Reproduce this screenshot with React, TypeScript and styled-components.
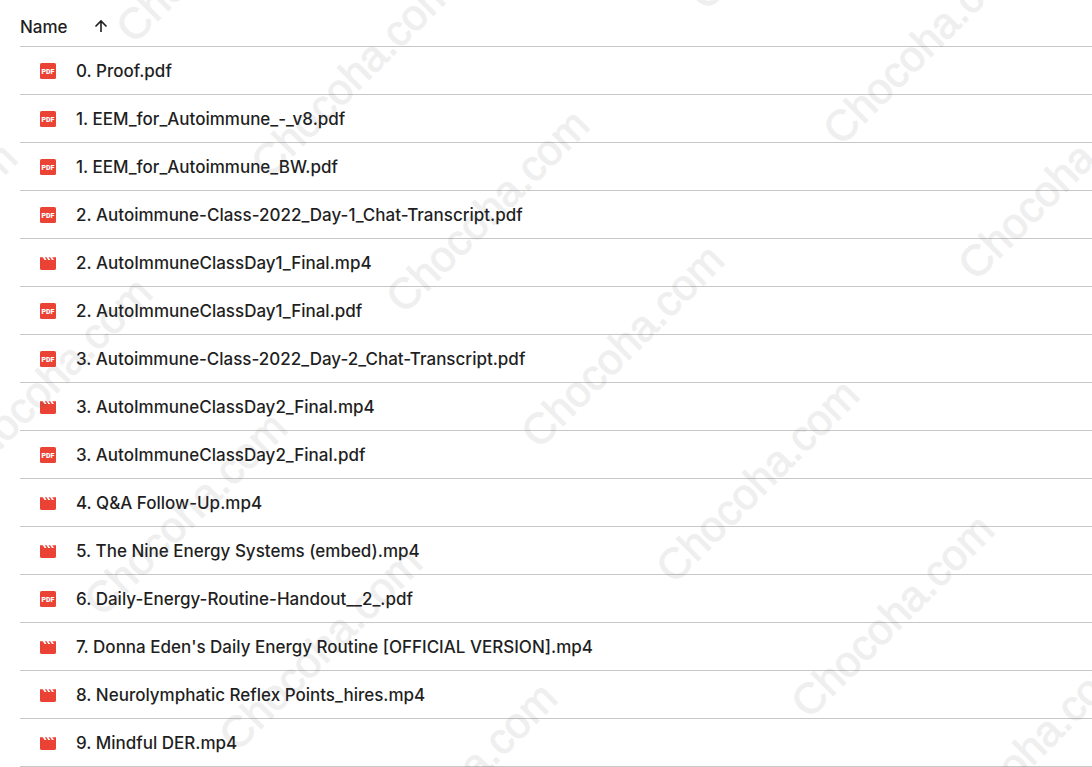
import React, { useState } from "react";
import styled, { createGlobalStyle } from "styled-components";

const GlobalStyle = createGlobalStyle`
  body {
    margin: 0;
    background: #fff;
    color: #1f1f1f;
    font-family: Inter, "Liberation Sans", sans-serif;
    font-size: 17px;
    font-weight: 500;
    line-height: 24px;
  }
`;

const Page = styled.main`
  position: relative;
  overflow: hidden;
  padding-left: 20px;
`;

const FileTable = styled.table`
  width: 100%;
  border-collapse: separate;
  border-spacing: 0;
`;

const HeaderCell = styled.th`
  height: 47px;
  padding: 8px 0 0;
  box-sizing: border-box;
  border-bottom: 1px solid #c7c7c7;
  text-align: left;
  font-weight: 500;
`;

const SortButton = styled.button`
  display: flex;
  align-items: center;
  gap: 24px;
  padding: 0;
  border: 0;
  background: none;
  color: inherit;
  font: inherit;
  cursor: pointer;
`;

const SortArrow = styled.svg<{ $descending: boolean }>`
  display: block;
  width: 18px;
  height: 18px;
  transform: ${(p) => (p.$descending ? "rotate(180deg)" : "none")};
`;

const FileCell = styled.td`
  height: 48px;
  padding: 0 20px;
  box-sizing: border-box;
  border-bottom: 1px solid #c7c7c7;
`;

const FileEntry = styled.div`
  display: flex;
  align-items: center;
  gap: 20px;
`;

const FileIcon = styled.svg`
  display: block;
  flex: none;
  width: 16px;
  height: 16px;
`;

const PdfLabel = styled.text`
  fill: #fff;
  font-family: Roboto, sans-serif;
  font-size: 7px;
  font-weight: 900;
`;

const WatermarkLayer = styled.svg`
  position: absolute;
  inset: 0;
  width: 100%;
  height: 100%;
  opacity: 0.09;
  pointer-events: none;
`;

const WatermarkText = styled.text`
  fill: #5a5a5a;
  stroke: #5a5a5a;
  stroke-width: 1px;
  font-family: "Liberation Sans", Arial, sans-serif;
  font-size: 43px;
  font-weight: 400;
`;

const files = [
  "0. Proof.pdf",
  "1. EEM_for_Autoimmune_-_v8.pdf",
  "1. EEM_for_Autoimmune_BW.pdf",
  "2. Autoimmune-Class-2022_Day-1_Chat-Transcript.pdf",
  "2. AutoImmuneClassDay1_Final.mp4",
  "2. AutoImmuneClassDay1_Final.pdf",
  "3. Autoimmune-Class-2022_Day-2_Chat-Transcript.pdf",
  "3. AutoImmuneClassDay2_Final.mp4",
  "3. AutoImmuneClassDay2_Final.pdf",
  "4. Q&A Follow-Up.mp4",
  "5. The Nine Energy Systems (embed).mp4",
  "6. Daily-Energy-Routine-Handout__2_.pdf",
  "7. Donna Eden's Daily Energy Routine [OFFICIAL VERSION].mp4",
  "8. Neurolymphatic Reflex Points_hires.mp4",
  "9. Mindful DER.mp4",
];

/* Baseline start of each diagonal mark, stepped 135px down and right. */
const marks = [
  { x: -168, y: 348, count: 5 },
  { x: 134, y: 45, count: 7 },
  { x: 706, y: 12, count: 3 },
].flatMap(({ x, y, count }) =>
  Array.from({ length: count }, (_, i) => ({ x: x + 135 * i, y: y + 135 * i })),
);

function PdfIcon() {
  return (
    <FileIcon viewBox="0 0 16 16" role="img" aria-label="PDF">
      <rect width="16" height="16" rx="1.5" fill="#ea4335" />
      <PdfLabel x="8" y="10.500" textAnchor="middle">
        PDF
      </PdfLabel>
    </FileIcon>
  );
}

function VideoIcon() {
  return (
    <FileIcon viewBox="0 0 16 16" role="img" aria-label="Video">
      <path
        fill="#ea4335"
        d="M0 2.200H2.800L4.600 5H6.600L4.800 2.200H6.500L8.300 5H10.300L8.500 2.200H10.200L12 5H14L12.200 2.200H16V13.600Q16 15 14.600 15H1.400Q0 15 0 13.600Z"
      />
    </FileIcon>
  );
}

export default function App() {
  const [descending, setDescending] = useState(false);
  const rows = descending ? [...files].reverse() : files;

  return (
    <Page>
      <GlobalStyle />
      <FileTable>
        <thead>
          <tr>
            <HeaderCell scope="col" aria-sort={descending ? "descending" : "ascending"}>
              <SortButton type="button" onClick={() => setDescending(!descending)}>
                Name
                <SortArrow viewBox="0 0 18 18" $descending={descending} aria-hidden="true">
                  <path
                    d="M9 14V3.500M3.500 8.500 9 3 14.500 8.500"
                    fill="none"
                    stroke="#1f1f1f"
                    strokeWidth="1.600"
                  />
                </SortArrow>
              </SortButton>
            </HeaderCell>
          </tr>
        </thead>
        <tbody>
          {rows.map((name) => (
            <tr key={name}>
              <FileCell>
                <FileEntry>
                  {name.endsWith(".pdf") ? <PdfIcon /> : <VideoIcon />}
                  <span>{name}</span>
                </FileEntry>
              </FileCell>
            </tr>
          ))}
        </tbody>
      </FileTable>
      <WatermarkLayer aria-hidden="true">
        {marks.map(({ x, y }) => (
          <WatermarkText key={`${x},${y}`} transform={`translate(${x} ${y}) rotate(-45)`}>
            Chocoha.com
          </WatermarkText>
        ))}
      </WatermarkLayer>
    </Page>
  );
}
